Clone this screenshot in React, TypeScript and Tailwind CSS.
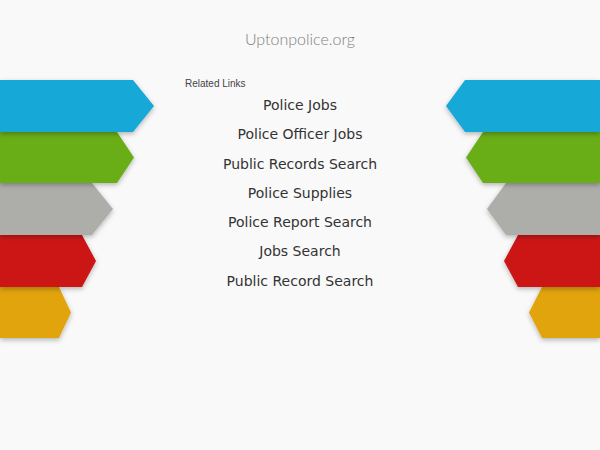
import React from 'react';

type Band = { color: string; points: string };

// left-hand arrow stack, drawn bottom-up so upper bands shade the ones below
const leftBands: Band[] = [
  { color: '#e2a411', points: '0,207 59,207 71,232.5 59,258 0,258' },
  { color: '#cc1315', points: '0,155 82,155 96,181 82,207 0,207' },
  { color: '#adadaa', points: '0,103 92,103 113,129 92,155 0,155' },
  { color: '#69ae15', points: '0,52 117,52 134,77.5 117,103 0,103' },
  { color: '#13a8d6', points: '0,0 133,0 154,26 133,52 0,52' },
];

const rightBands: Band[] = [
  { color: '#e2a411', points: '154,207 96,207 83,232.5 96,258 154,258' },
  { color: '#cc1315', points: '154,155 72,155 58,181 72,207 154,207' },
  { color: '#adadaa', points: '154,103 60,103 41,129 60,155 154,155' },
  { color: '#69ae15', points: '154,52 37,52 20,77.5 37,103 154,103' },
  { color: '#13a8d6', points: '154,0 19,0 0,26 19,52 154,52' },
];

const links = [
  'Police Jobs',
  'Police Officer Jobs',
  'Public Records Search',
  'Police Supplies',
  'Police Report Search',
  'Jobs Search',
  'Public Record Search',
];

function ArrowStack({ bands, id }: { bands: Band[]; id: string }) {
  return (
    <svg width="154" height="262" viewBox="0 0 154 262" className="block overflow-visible">
      <defs>
        <filter id={id} x="-20%" y="-20%" width="140%" height="160%">
          <feDropShadow dx="0" dy="2" stdDeviation="2.5" floodColor="#000" floodOpacity="0.28" />
        </filter>
      </defs>
      {bands.map((b) => (
        <polygon key={b.points} points={b.points} fill={b.color} filter={`url(#${id})`} />
      ))}
    </svg>
  );
}

export default function App() {
  return (
    <div className="w-[600px] h-[450px] bg-[#f9f9f9] overflow-hidden">
      <div className="pt-[29px] h-[80px] text-center text-[16px] font-light text-[#808080] font-['Lato',sans-serif] leading-[20px]">
        Uptonpolice.org
      </div>
      <div className="grid grid-cols-[154px_1fr_154px]">
        <ArrowStack bands={leftBands} id="shadow-l" />
        <div className="font-['DejaVu_Sans',sans-serif]">
          <div className="-mt-[1px] pl-[31px] text-[10px] leading-[10px] text-[#444] font-['Liberation_Sans',sans-serif]">
            Related Links
          </div>
          <ul className="mt-[2px] flex flex-col items-center text-[14px] text-[#333]">
            {links.map((l) => (
              <li key={l} className="h-[29.3px] leading-[29.3px]">
                {l}
              </li>
            ))}
          </ul>
        </div>
        <ArrowStack bands={rightBands} id="shadow-r" />
      </div>
    </div>
  );
}
